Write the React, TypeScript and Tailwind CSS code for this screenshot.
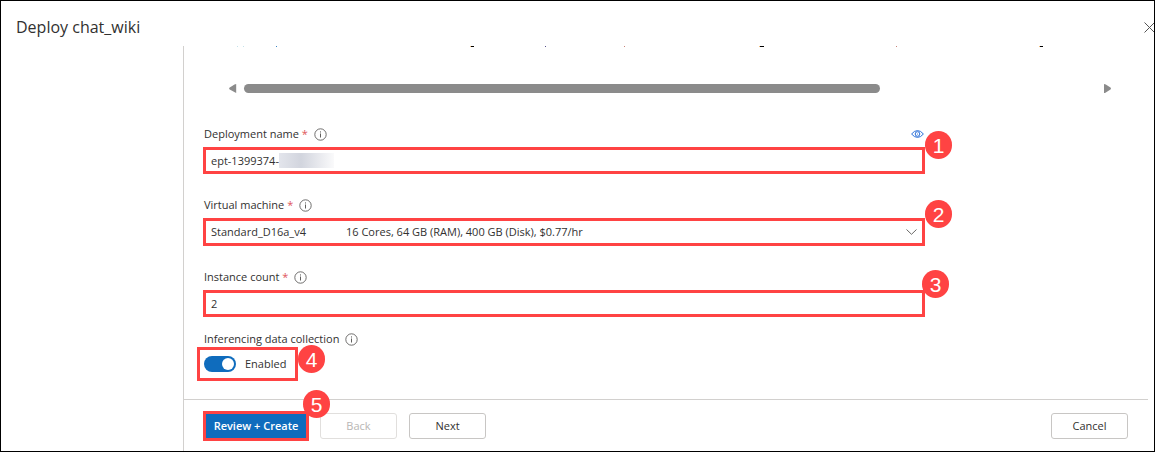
import React, { useState } from "react";

function InfoIcon() {
  return (
    <svg width="13" height="13" viewBox="0 0 13 13" fill="none" stroke="#5f5e5c" aria-hidden="true">
      <circle cx="6.5" cy="6.5" r="5.7" strokeWidth="0.9" />
      <path d="M6.5 5.5v4" strokeWidth="1" />
      <path d="M6.5 3.4v1.1" strokeWidth="1" />
    </svg>
  );
}

function Required() {
  return <span className="text-[#e0565b]">*</span>;
}

const badge =
  "pointer-events-none absolute z-10 flex h-7 w-[27px] items-center justify-center rounded-full bg-[#ff4343] font-['Liberation_Sans',sans-serif] text-[21px] leading-none text-white";

const fieldBox = "relative grid w-full items-center border-3 border-[#ff4343] bg-white";
const label = "flex h-4 items-center gap-[6px] pl-px text-[11px] leading-4 text-[#323130]";
const button = "h-[26px] w-[77px] rounded-[3px] border text-[11px] leading-4";

function CodePreview() {
  return (
    <div className="pr-9 pl-[45px]">
      <svg width="820" height="1" viewBox="0 0 820 1" aria-hidden="true" className="-mb-px block">
        <path d="M8 0h1v1H8z M14 0h1v1h-1z" fill="#c4e2ea" />
        <path d="M47 0h1v1h-1z" fill="#3b86c6" />
        <path d="M242 0h3v1h-3z M531 0h4v1h-4z M811 0h3v1h-3z" fill="#000" />
        <path d="M241 0h1v1h-1z M530 0h1v1h-1z M810 0h1v1h-1z" fill="#f0bd7c" />
        <path d="M316 0h1v1h-1z" fill="#56508c" />
        <path d="M395 0h1v1h-1z M667 0h1v1h-1z" fill="#c98379" />
      </svg>
      <div className="mt-[38px] flex h-[9px] items-center">
        <svg width="8" height="9" viewBox="0 0 8 9" fill="#8b8b8b" aria-hidden="true">
          <path d="M7.2 0v9L.7 5.4Q-.4 4.5.7 3.6L5.5.4Q6.3 0 7.2 0z" />
        </svg>
        <div className="mr-2 ml-[7px] h-full flex-1">
          <div className="h-full w-3/4 rounded-full bg-[#8b8b8b]" style={{ width: `${(636 / 852) * 100}%` }} />
        </div>
        <svg width="8" height="9" viewBox="0 0 8 9" fill="#8b8b8b" aria-hidden="true">
          <path d="M0 0v9Q1 9 1.8 8.5L6.5 5.4Q7.6 4.5 6.5 3.6L1.8.5Q1 0 0 0z" />
        </svg>
      </div>
    </div>
  );
}

export default function App() {
  const [name, setName] = useState("ept-1399374-");
  const [count, setCount] = useState("2");
  const [enabled, setEnabled] = useState(true);

  return (
    <div className="flex min-h-screen flex-col overflow-hidden border border-black bg-white font-['Open_Sans','Noto_Sans',sans-serif] text-[11px] text-[#323130]">
      <header className="flex h-[45px] items-center justify-between pt-[7px] pl-[15px]">
        <h1 className="text-base leading-6">Deploy chat_wiki</h1>
        <button type="button" aria-label="Close" className="-mr-px">
          <svg width="11" height="11" viewBox="0 0 11 11" stroke="#555" strokeWidth="1" aria-hidden="true">
            <path d="M.5.5l10 10M10.5.5l-10 10" />
          </svg>
        </button>
      </header>

      <div className="flex flex-1">
        <aside className="w-[182px] shrink-0" />
        <main className="mr-[6px] flex flex-1 flex-col border-l border-[#d2d0ce]">
          <CodePreview />

          <div className="mt-[33px] w-full max-w-[741px] pl-[19px]">
            <div className="flex items-center justify-between">
              <label htmlFor="deployment" className={label}>
                <span>
                  Deployment name <Required />
                </span>
                <InfoIcon />
              </label>
              <svg width="13" height="8" viewBox="0 0 13 8" fill="none" stroke="#2b70d8" aria-hidden="true" className="mr-px">
                <path d="M.6 4Q3.3.6 6.5.6T12.4 4Q9.7 7.4 6.5 7.4T.6 4z" />
                <circle cx="6.5" cy="4" r="2.3" />
                <circle cx="6.5" cy="4" r=".6" fill="#2b70d8" stroke="none" />
              </svg>
            </div>
            <div className={`${fieldBox} mt-[5px] h-[27px]`}>
              <input
                id="deployment"
                value={name}
                onChange={(e) => setName(e.target.value)}
                className="col-start-1 row-start-1 h-full w-full pl-[5px] outline-none"
              />
              <span className="pointer-events-none col-start-1 row-start-1 ml-[73px] h-[15px] w-[55px] bg-linear-to-r from-[#e3e5ec] via-[#d2d5de] via-40% to-[#fafafb]" />
              <span className={`${badge} -top-[19px] left-full ml-[3px]`}>1</span>
            </div>

            <label htmlFor="machine" className={`${label} mt-[23px]`}>
              <span>
                Virtual machine <Required />
              </span>
              <InfoIcon />
            </label>
            <div className={`${fieldBox} mt-[5px] h-7`}>
              <select
                id="machine"
                className="col-start-1 row-start-1 h-full w-full appearance-none pl-[5px] outline-none"
              >
                <option>Standard_D16a_v4</option>
              </select>
              <span className="pointer-events-none col-start-1 row-start-1 flex items-center justify-between pr-[5px] pl-[140px] leading-4">
                16 Cores, 64 GB (RAM), 400 GB (Disk), $0.77/hr
                <svg width="11" height="6" viewBox="0 0 11 6" fill="none" stroke="#6b6a68" aria-hidden="true">
                  <path d="M.5.5l5 4.8 5-4.8" />
                </svg>
              </span>
              <span className={`${badge} -top-[21px] left-full ml-[3px]`}>2</span>
            </div>

            <label htmlFor="instances" className={`${label} mt-[23px]`}>
              <span>
                Instance count <Required />
              </span>
              <InfoIcon />
            </label>
            <div className={`${fieldBox} mt-[5px] h-[27px]`}>
              <input
                id="instances"
                inputMode="numeric"
                value={count}
                onChange={(e) => setCount(e.target.value)}
                className="h-full w-full pl-[5px] outline-none"
              />
              <span className={`${badge} -top-[23px] left-full`}>3</span>
            </div>

            <label htmlFor="collection" className={`${label} mt-[14px]`}>
              Inferencing data collection
              <InfoIcon />
            </label>
            <div className="relative -ml-[6px] flex h-[34px] w-[101px] items-center gap-[9px] border-3 border-[#ff4343] pl-1">
              <input
                id="collection"
                type="checkbox"
                role="switch"
                checked={enabled}
                onChange={(e) => setEnabled(e.target.checked)}
                className="flex h-4 w-8 appearance-none items-center rounded-full bg-[#8a8886] px-[2px] before:size-3 before:rounded-full before:bg-white checked:justify-end checked:bg-[#0f6cbd]"
              />
              <span>{enabled ? "Enabled" : "Disabled"}</span>
              <span className={`${badge} -top-[5px] left-full ml-[3px]`}>4</span>
            </div>
          </div>

          <footer className="mt-[18px] flex items-center border-t border-[#d2d0ce] pt-[11px] pr-5 pb-[10px] pl-[19px]">
            <button
              type="button"
              className="relative h-[30px] w-[106px] border-3 border-[#ff4343] bg-[#0f6cbd] text-[11px] leading-4 font-semibold text-white"
            >
              Review + Create
              <span className={`${badge} -top-6 left-full -ml-[3px] font-normal`}>5</span>
            </button>
            <button type="button" disabled className={`${button} ml-[11px] border-[#e1dfdd] text-[#b8b6b4]`}>
              Back
            </button>
            <button type="button" className={`${button} ml-3 border-[#c8c6c4]`}>
              Next
            </button>
            <button type="button" className={`${button} ml-auto border-[#c8c6c4]`}>
              Cancel
            </button>
          </footer>
        </main>
      </div>
    </div>
  );
}
